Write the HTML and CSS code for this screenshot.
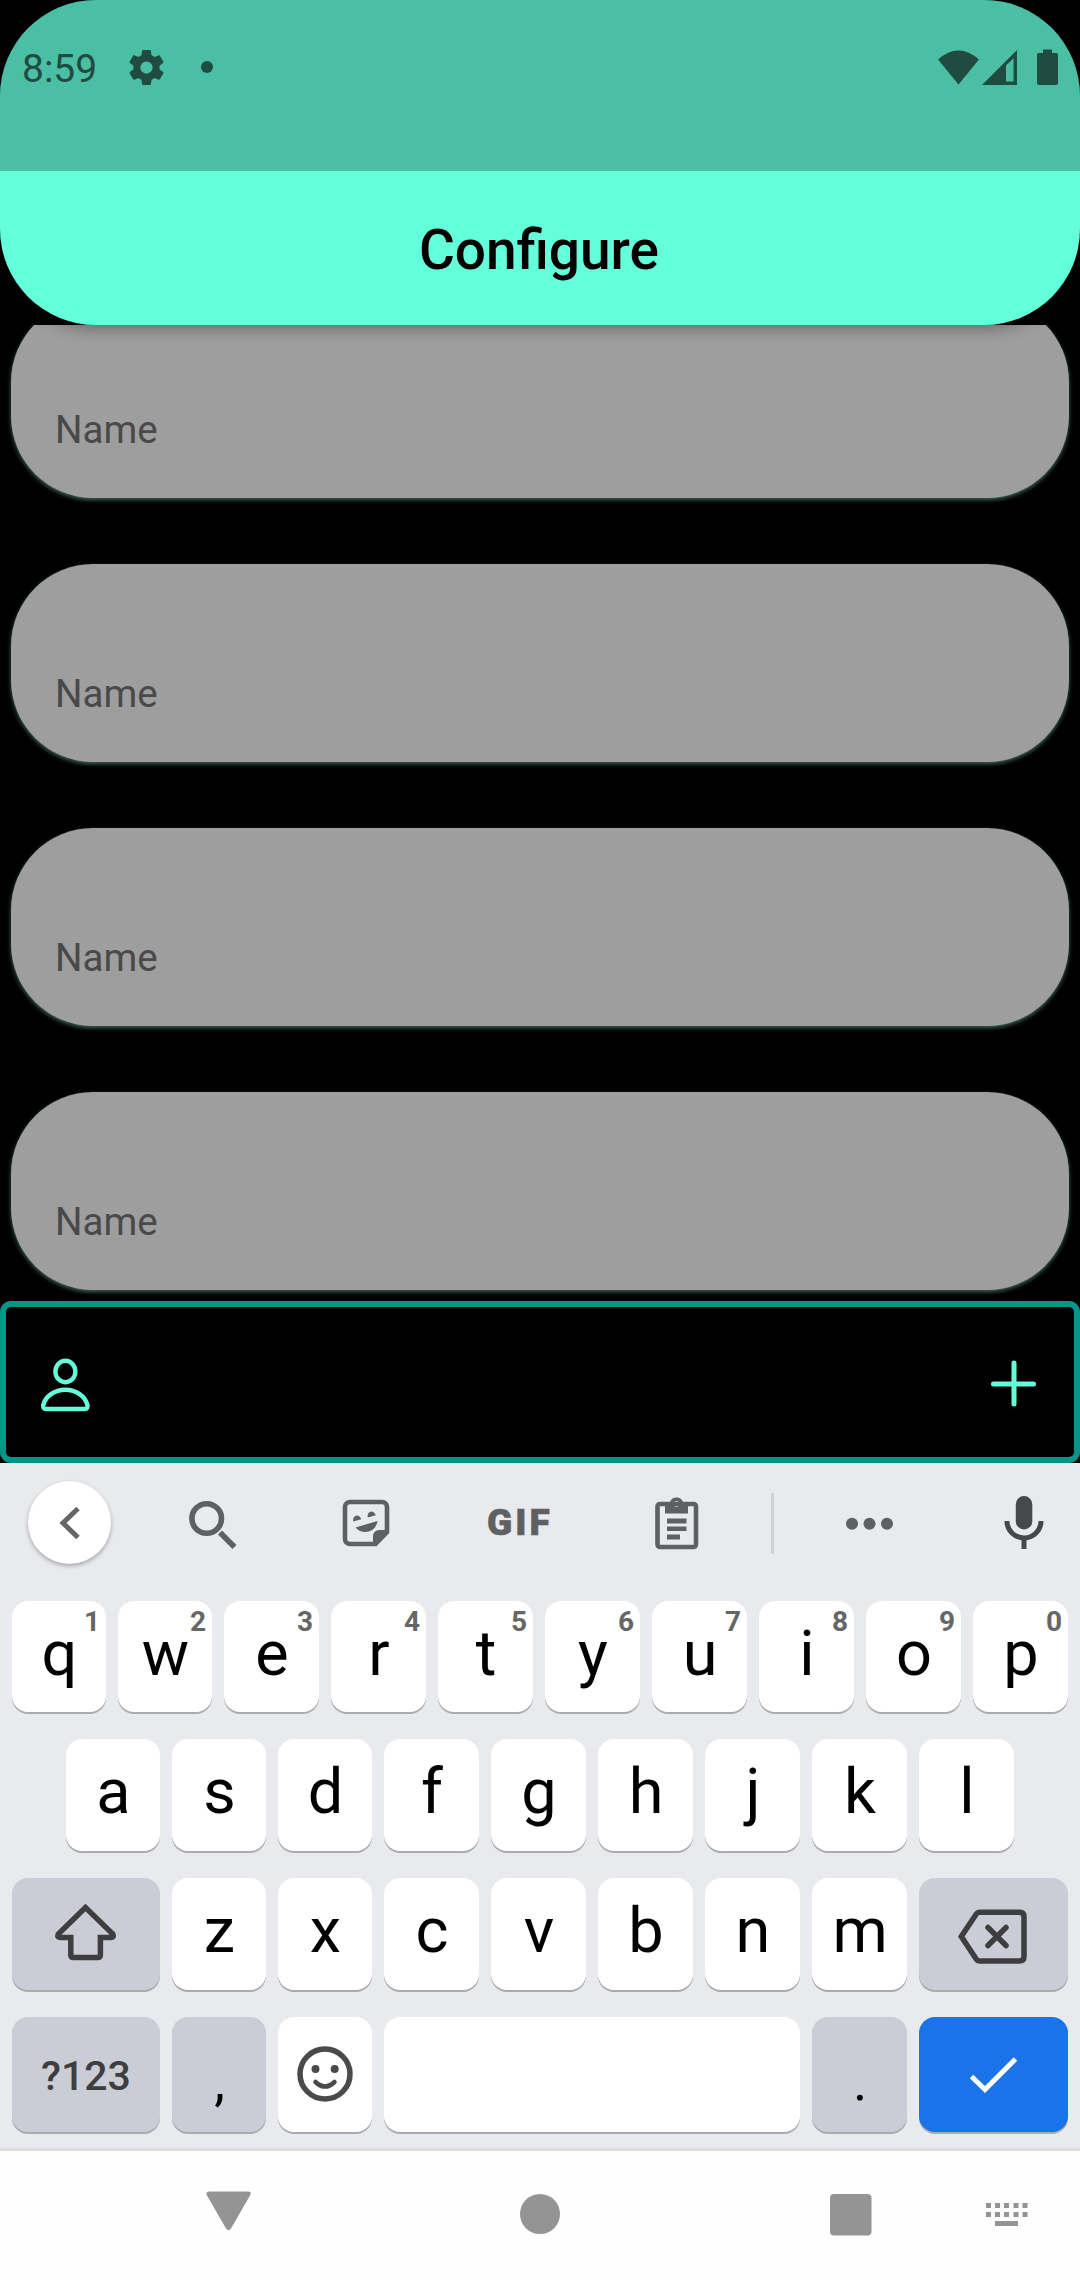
FILE: index.html
```html
<!DOCTYPE html>
<html lang="en">
<head>
<meta charset="utf-8">
<title>Configure</title>
<link rel="stylesheet" href="styles.css">
</head>
<body>
<div class="screen">
  <header class="header">
    <div class="status">
      <span class="clock">8:59</span>
      <svg class="gear" width="35" height="35" viewBox="2 2 20 20"><path d="M19.43 12.98c.04-.32.07-.64.07-.98s-.03-.66-.07-.98l2.11-1.65c.19-.15.24-.42.12-.64l-2-3.46c-.12-.22-.39-.3-.61-.22l-2.490 1c-.52-.4-1.080-.73-1.690-.98l-.38-2.650C14.460 2.180 14.250 2 14 2h-4c-.25 0-.46.18-.49.42l-.38 2.650c-.61.25-1.170.59-1.690.98l-2.490-1c-.23-.09-.49 0-.61.22l-2 3.460c-.13.22-.07.49.12.64l2.110 1.650c-.04.32-.07.65-.07.98s.03.66.07.98l-2.110 1.650c-.19.15-.24.42-.12.64l2 3.460c.12.22.39.3.61.22l2.490-1c.52.4 1.080.73 1.690.98l.38 2.650c.03.24.24.42.49.42h4c.25 0 .46-.18.49-.42l.38-2.650c.61-.25 1.170-.59 1.690-.98l2.490 1c.23.09.49 0 .61-.22l2-3.460c.12-.22.07-.49-.12-.64l-2.110-1.650zM12 15.500A3.500 3.500 0 1 1 12 8.500a3.500 3.500 0 0 1 0 7z"/></svg>
      <span class="dot"></span>
      <svg class="signals" width="130" height="50" viewBox="930 43 130 50">
        <path d="M938 59.500Q958.500 41.500 979 59.500L958.500 84.500Z"/>
        <path fill-rule="evenodd" d="M982 85L1017 50V85ZM1006 65.500V81.500H1013.500V58.500Z"/>
        <path d="M1043 49.500h9v3.500h4.500a1.500 1.500 0 0 1 1.500 1.500v28.500a2 2 0 0 1-2 2h-17a2 2 0 0 1-2-2v-28.500a1.500 1.500 0 0 1 1.500-1.500h4.500z"/>
      </svg>
    </div>
    <h1 class="title">Configure</h1>
  </header>

  <main class="list">
    <div class="card">Name</div>
    <div class="card">Name</div>
    <div class="card">Name</div>
    <div class="card">Name</div>
  </main>

  <div class="actions">
    <svg width="56" height="60" viewBox="0 0 56 60"><ellipse cx="28.400" cy="16.500" rx="10" ry="10.700"/><path d="M9 54H48Q50.500 54 50.500 50.500C48.500 41 39 34.800 28.400 34.800S8 41 6.200 50.500Q6 54 9 54Z"/></svg>
    <svg class="plus" width="50" height="50" viewBox="0 0 50 50"><path d="M4.500 25H44.500M25 4V45"/></svg>
  </div>

  <section class="keyboard">
    <div class="tools">
      <div class="tool back"><span class="back-disc"><svg width="24" height="36" viewBox="0 0 24 36"><path d="M20 3.500L5 18L20 32.500"/></svg></span></div>
      <svg class="tool" width="140" height="138" viewBox="140 1463 140 138"><circle cx="206.700" cy="1518.500" r="14.800" class="line"/><path d="M220 1532.500L234.500 1547" class="line"/></svg>
      <svg class="tool" width="160" height="138" viewBox="280 1463 160 138"><path class="line thin" d="M350 1502H382a5 5 0 0 1 5 5V1532L375.500 1544H350a5 5 0 0 1-5-5V1507a5 5 0 0 1 5-5Z"/><path d="M373 1545V1536a6 6 0 0 1 6-6h9l1 2.500L376 1546ZM353.300 1521.500a4 4.700 -15 1 1 7.900-2.200ZM367.800 1517.500a4 4.700 -15 1 1 7.900-2.200ZM355.500 1527.500L377.500 1521C376.500 1528 371 1532 365.500 1532Q359.500 1532 355.500 1527.500Z"/></svg>
      <span class="gif">GIF</span>
      <svg class="tool" width="171" height="138" viewBox="600 1463 171 138"><rect class="line thin" x="657.500" y="1504" width="38.500" height="43" rx="2.500"/><path fill-rule="evenodd" d="M665 1502H670A7 7 0 0 1 683 1502H688V1513.500H665ZM676.500 1501a3 3 0 1 0 .1 0Z"/><path d="M667 1518.500h19.500v5H667ZM667 1526.500h19.500v4.500H667ZM667 1534.500h13v5H667Z"/></svg>
      <span class="rule"></span>
      <svg class="tool" width="176" height="138" viewBox="774 1463 176 138"><circle cx="852" cy="1523.700" r="6"/><circle cx="869.500" cy="1523.700" r="6"/><circle cx="887" cy="1523.700" r="6"/></svg>
      <svg class="tool mic" width="130" height="138" viewBox="950 1463 130 138"><rect x="1015.800" y="1496" width="16.500" height="33.500" rx="8.250"/><path d="M1007 1521a17 17 0 0 0 34 0M1024 1538V1549"/></svg>
    </div>

    <div class="keys">
      <div class="row first">
        <div class="key slim">q<sup>1</sup></div><div class="key slim">w<sup>2</sup></div><div class="key">e<sup>3</sup></div><div class="key">r<sup>4</sup></div><div class="key">t<sup>5</sup></div><div class="key">y<sup>6</sup></div><div class="key">u<sup>7</sup></div><div class="key">i<sup>8</sup></div><div class="key">o<sup>9</sup></div><div class="key">p<sup>0</sup></div>
      </div>
      <div class="row inset">
        <div class="key slim">a</div><div class="key slim">s</div><div class="key slim">d</div><div class="key">f</div><div class="key">g</div><div class="key">h</div><div class="key">j</div><div class="key">k</div><div class="key">l</div>
      </div>
      <div class="row">
        <div class="key wide grey"><svg width="148" height="112" viewBox="0 0 148 112"><path d="M73.500 29.500L46.300 56Q44.800 59.500 48 59.500H58.800V77Q58.800 79.500 61.500 79.500H85.700Q88.400 79.500 88.400 77V59.500H99.200Q102.300 59.500 100.800 56Z"/></svg></div>
        <div class="key slim">z</div><div class="key slim">x</div><div class="key">c</div><div class="key">v</div><div class="key">b</div><div class="key">n</div><div class="key">m</div>
        <div class="key wider grey"><svg width="148" height="112" viewBox="0 0 148 112"><path d="M60.500 34.200H100.500Q105 34.200 105 38.700V78.500Q105 83 100.500 83H60.500Q58.500 83 57.500 81.500L42.300 58.600L57.500 35.700Q58.500 34.200 60.500 34.200Z"/><path class="round" d="M69 49.500L87 67.500M87 49.500L69 67.500"/></svg></div>
      </div>
      <div class="row last">
        <div class="key wide grey sym">?123</div>
        <div class="key slim grey punct">,</div>
        <div class="key slim"><svg class="smile" width="94" height="115" viewBox="0 0 94 115"><circle cx="47" cy="57" r="25"/><path class="round" d="M37.500 65Q47 74 56.500 65"/><circle class="eye" cx="37.500" cy="52" r="4"/><circle class="eye" cx="56.700" cy="52" r="4"/></svg></div>
        <div class="key space"></div>
        <div class="key grey punct">.</div>
        <div class="key wider enter"><svg width="148" height="115" viewBox="0 0 148 115"><path d="M52.500 59.500L66 72.500L96.500 42"/></svg></div>
      </div>
    </div>
  </section>

  <nav class="nav">
    <svg width="1080" height="129" viewBox="0 2151 1080 129"><path d="M209 2191.500H248.500Q252 2192 250 2195.500L231 2228.500Q228.500 2232 226 2228.500L207 2195.500Q205 2192 209 2191.500Z"/><circle cx="540" cy="2214" r="20"/><rect x="830" y="2194" width="41.500" height="41.500" rx="4"/><path d="M986 2203h5v5h-5zM995 2203h5v5h-5zM1004 2203h5v5h-5zM1013.500 2203h5v5h-5zM1022.500 2203h5v5h-5zM986 2212h5v5h-5zM995 2212h5v5h-5zM1004 2212h5v5h-5zM1013.500 2212h5v5h-5zM1022.500 2212h5v5h-5zM995 2221h23v5h-23z"/></svg>
  </nav>
</div>
</body>
</html>
```
FILE: styles.css
```css
* { box-sizing: border-box; }
body { margin: 0; background: #000; font-family: Roboto, sans-serif; }
svg { display: block; flex: none; }

.screen { display: flex; flex-direction: column; width: 1080px; height: 2280px; background: #000; overflow: hidden; }

.header { position: relative; z-index: 1; flex: none; height: 325px; border-radius: 96px; overflow: hidden; background: #64ffda; }
.status { display: flex; align-items: flex-start; height: 171px; padding-left: 22px; background: rgba(0, 0, 0, .25); fill: #1f4b41; color: #1f4b41; }
.clock { width: 105px; font-size: 39px; line-height: 139px; }
.gear { margin: 50px 0 0 2px; }
.dot { width: 12px; height: 12px; margin: 61px 0 0 37px; border-radius: 50%; background: #1f4b41; }
.signals { margin: 43px 20px 0 auto; }
.title { margin: 0; padding-right: 2px; text-align: center; font-size: 55px; font-weight: 500; line-height: 158px; color: #000; }

.list { position: relative; display: flex; flex: none; flex-direction: column; justify-content: flex-end; gap: 66px; height: 976px; padding: 0 11px 11px; overflow: hidden; }
.list::before { content: ""; position: absolute; z-index: 1; left: 0; right: 0; top: -200px; height: 200px; border-radius: 96px; box-shadow: 0 4px 16px rgba(0, 0, 0, .32); }
.card { flex: none; height: 198px; padding: 90px 44px 0; border-radius: 82px; background: #9e9e9e; box-shadow: 0 2px 4px rgba(128, 220, 196, .45); font-size: 38.500px; line-height: 79px; color: #494949; }

.actions { display: flex; flex: none; align-items: flex-start; justify-content: space-between; height: 162px; padding: 48px 34px 0 31px; border: 6px solid #009688; border-radius: 11px; fill: none; stroke: #64ffda; stroke-width: 4.400; }
.plus { margin-top: 4px; margin-right: 1px; stroke-width: 5; stroke-linecap: round; }

.keyboard { flex: none; height: 688px; background: #e8eaed; border-bottom: 3px solid #dedede; }
.tools { display: flex; height: 138px; fill: #5f6062; }
.line { fill: none; stroke: #5f6062; stroke-width: 5.600; }
.thin { stroke-width: 4.600; }
.back { width: 140px; padding: 18px 0 0 28px; }
.back-disc { display: flex; align-items: center; justify-content: center; width: 83px; height: 83px; border-radius: 50%; background: #fff; box-shadow: 0 2px 4px rgba(0, 0, 0, .3); fill: none; stroke: #666; stroke-width: 5; }
.gif { width: 160px; padding-left: 47px; font-size: 37px; font-weight: 900; line-height: 119px; letter-spacing: 3px; color: #5f6062; -webkit-text-stroke: .6px #5f6062; }
.rule { width: 3px; height: 61px; margin-top: 30px; background: #cfd1d4; }
.mic { fill: #47484a; }
.mic path { fill: none; stroke: #47484a; stroke-width: 5; }

.row { display: flex; gap: 12px; height: 112px; margin-bottom: 27px; padding-left: 12px; }
.row.first { height: 111px; }
.row.inset { padding-left: 66px; }
.row.last { height: 115px; margin: 0; }
.key { position: relative; flex: none; width: 95px; border-radius: 16px; background: #fff; box-shadow: 0 2px 0 #a9abae; text-align: center; text-indent: 1px; font-size: 63px; line-height: 105px; color: #000; }
.key sup { position: absolute; top: 0; right: 6px; font-size: 28px; font-weight: 700; line-height: 41px; text-indent: 0; color: #666; }
.slim { width: 94px; }
.wide { width: 148px; }
.wider { width: 149px; }
.space { width: 416px; }
.grey { background: #cbcdd6; }
.sym { font-size: 41px; font-weight: 500; line-height: 118px; text-indent: 0; color: #3e3e40; }
.punct { font-size: 54px; line-height: 129px; }
.key svg { fill: none; stroke: #3e3e40; stroke-width: 5.500; }
.key .round { stroke-linecap: round; }
.key .smile { stroke: #4a4a4a; }
.key .smile path { stroke-width: 4.500; }
.key .eye { fill: #4a4a4a; stroke: none; }
.enter { background: #1a73e8; }
.key.enter svg { stroke: #fff; stroke-width: 5; }

.nav { flex: none; height: 129px; background: #fefefe; fill: #949494; }
```
